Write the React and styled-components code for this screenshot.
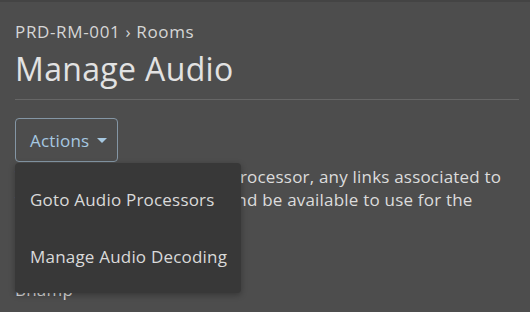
import React from "react";
import styled, { createGlobalStyle } from "styled-components";

const Global = createGlobalStyle`
  html, body { margin: 0; padding: 0; background: #4d4d4d; }
  body { font-family: "Open Sans", "Liberation Sans", sans-serif; color: #dcdcdc; overflow: hidden; }
`;

const Page = styled.div`
  height: 312px;
  box-sizing: border-box;
  border-top: 2px solid #444;
  padding: 0 11px 0 15px;
`;

const Crumb = styled.div`
  font-size: 17px;
  letter-spacing: 0.65px;
  line-height: 20px;
  margin-top: 20px;
  color: #d6d6d6;
`;

const Title = styled.h1`
  font-weight: 400;
  font-size: 32px;
  letter-spacing: 0.35px;
  line-height: 38px;
  margin: 8px 0 0;
  color: #e2e2e2;
`;

const Rule = styled.hr`
  border: 0;
  border-top: 1px solid #666;
  margin: 11px 0 18px;
`;

const ActionsWrap = styled.div`
  position: relative;
  display: inline-block;
`;

const ActionsButton = styled.button`
  display: flex;
  align-items: center;
  gap: 8px;
  height: 44px;
  padding: 0 10px 0 14px;
  background: transparent;
  border: 1px solid #8496a5;
  border-radius: 4px;
  color: #a6c8e1;
  font-family: inherit;
  font-size: 17px;
  letter-spacing: 0.2px;
`;

const Caret = styled.span`
  width: 0;
  height: 0;
  border-left: 5px solid transparent;
  border-right: 5px solid transparent;
  border-top: 5px solid #a6c8e1;
`;

const Menu = styled.div`
  position: absolute;
  top: 45px;
  left: 0;
  width: 226px;
  padding: 8px 0;
  background: #383838;
  border-radius: 4px;
  box-shadow: 0 2px 6px rgba(0,0,0,0.3);
  z-index: 2;
`;

const MenuItem = styled.div`
  padding: 0 15px;
  line-height: 57px;
  font-size: 17px;
  letter-spacing: 0.2px;
  color: #dadada;
  white-space: nowrap;
`;

const Para = styled.p`
  font-size: 17px;
  letter-spacing: 0.2px;
  line-height: 23px;
  margin: 3px 0 0;
  color: #dcdcdc;
  white-space: nowrap;
`;

const Label = styled.div`
  font-size: 17px;
  letter-spacing: 0.2px;
  margin-top: 44px;
  color: #dcdcdc;
`;

export default function App() {
  return (
    <>
      <Global />
      <Page>
        <Crumb>PRD-RM-001 › Rooms</Crumb>
        <Title>Manage Audio</Title>
        <Rule />
        <ActionsWrap>
          <ActionsButton>Actions<Caret /></ActionsButton>
          <Menu>
            <MenuItem>Goto Audio Processors</MenuItem>
            <MenuItem>Manage Audio Decoding</MenuItem>
          </Menu>
        </ActionsWrap>
        <Para>
          When removing the audio processor, any links associated to
          <br />
          will be removed from this and be available to use for the
          <br />
          next processor.
        </Para>
        <Label>Bhamp</Label>
      </Page>
    </>
  );
}
